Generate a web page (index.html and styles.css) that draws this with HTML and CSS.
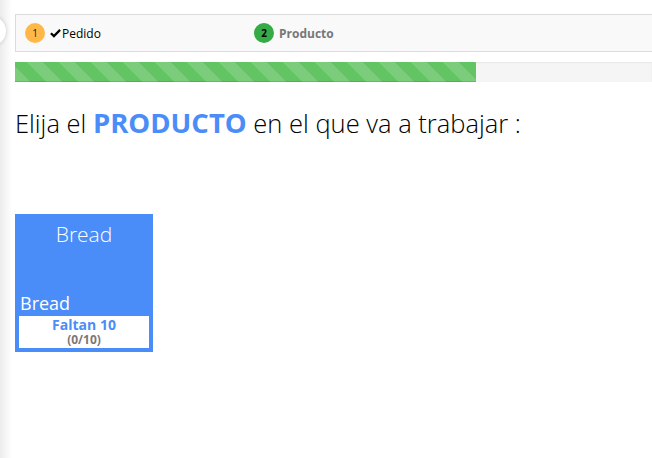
FILE: index.html
```html
<!DOCTYPE html>
<html lang="es">
<head>
<meta charset="utf-8">
<title>Producto</title>
<link rel="stylesheet" href="styles.css">
</head>
<body>
<div class="side-shadow"></div>
<div class="toggle"></div>
<main class="page">
  <div class="steps">
    <div class="step step-done">
      <span class="badge badge-orange">1</span>
      <svg class="check" viewBox="0 0 12 10" width="11" height="10" aria-hidden="true"><path d="M1 5.2 L4.3 8.4 L11 1.6" fill="none" stroke="#000" stroke-width="2.4"/></svg><span class="step-label">Pedido</span>
    </div>
    <div class="step step-active">
      <span class="badge badge-green">2</span>
      <span class="step-label strong">Producto</span>
    </div>
  </div>
  <div class="progress">
    <div class="progress-fill" style="width:461px"></div>
  </div>
  <h1 class="title">Elija el <b class="hl">PRODUCTO</b> en el que va a trabajar :</h1>
  <div class="tiles">
    <div class="tile">
      <div class="tile-name">Bread</div>
      <div class="tile-sub">Bread</div>
      <div class="tile-box">
        <div class="tile-left">Faltan 10</div>
        <div class="tile-count">(0/10)</div>
      </div>
    </div>
  </div>
</main>
</body>
</html>
```
FILE: styles.css
```css
html, body {
  margin: 0;
  padding: 0;
  background: #fff;
  font-family: "Open Sans", "Liberation Sans", sans-serif;
  color: #000;
  overflow: hidden;
}
body {
  width: 652px;
  height: 458px;
  position: relative;
}
.side-shadow {
  position: absolute;
  left: 0;
  top: 0;
  bottom: 0;
  width: 12px;
  background: linear-gradient(to right, #ececec, rgba(255,255,255,0));
}
.toggle {
  position: absolute;
  left: -24px;
  top: 16px;
  width: 30px;
  height: 30px;
  border-radius: 50%;
  background: #fff;
  box-shadow: 0 0 4px rgba(0,0,0,0.18);
}
.page {
  padding: 14px 0 0 15px;
}
.steps {
  display: flex;
  align-items: center;
  height: 36px;
  background: #f9f9f9;
  border: 1px solid #dcdcdc;
  border-right: none;
  padding-left: 9px;
}
.step {
  display: flex;
  align-items: center;
  font-size: 12px;
}
.step-done {
  width: 229px;
}
.badge {
  width: 20px;
  height: 20px;
  border-radius: 50%;
  display: inline-flex;
  align-items: center;
  justify-content: center;
  font-size: 10px;
}
.badge-orange {
  background: #ffb848;
  color: #222;
}
.badge-green {
  background: #35aa47;
  color: #000;
  font-weight: 700;
}
.check {
  margin-left: 5px;
  display: block;
}
.step-label {
  margin-left: 1px;
}
.step-label.strong {
  margin-left: 5px;
  font-weight: 700;
  color: #777;
}
.progress {
  margin-top: 10px;
  height: 20px;
  background: #f5f5f5;
  box-shadow: inset 0 1px 2px rgba(0,0,0,0.06);
}
.progress-fill {
  height: 100%;
  background-color: #62c462;
  background-image: repeating-linear-gradient(45deg, rgba(255,255,255,0.16) 0 11.3px, rgba(255,255,255,0) 11.3px 22.6px);
  box-shadow: inset 0 -1px 0 rgba(0,0,0,0.12);
}
.title {
  margin: 23px 0 0;
  font-size: 25.5px;
  font-weight: 300;
  line-height: 36px;
  color: #000;
}
.hl {
  font-size: 27.5px;
  font-weight: 700;
  color: #4b8df8;
}
.tiles {
  margin-top: 73px;
  display: flex;
}
.tile {
  width: 130px;
  height: 130px;
  padding: 4px;
  background: #4b8df8;
  display: flex;
  flex-direction: column;
  color: #fff;
}
.tile-name {
  text-align: center;
  font-size: 21px;
  font-weight: 300;
  line-height: 26px;
  margin-top: 3px;
}
.tile-sub {
  margin-top: auto;
  margin-bottom: 2px;
  font-size: 18px;
  line-height: 22px;
  padding-left: 1px;
}
.tile-box {
  background: #fff;
  height: 32px;
  text-align: center;
  font-weight: 700;
  display: flex;
  flex-direction: column;
  justify-content: center;
}
.tile-left {
  font-size: 14px;
  line-height: 16px;
  color: #4b8df8;
}
.tile-count {
  font-size: 12px;
  line-height: 14px;
  color: #7d7777;
}
```
